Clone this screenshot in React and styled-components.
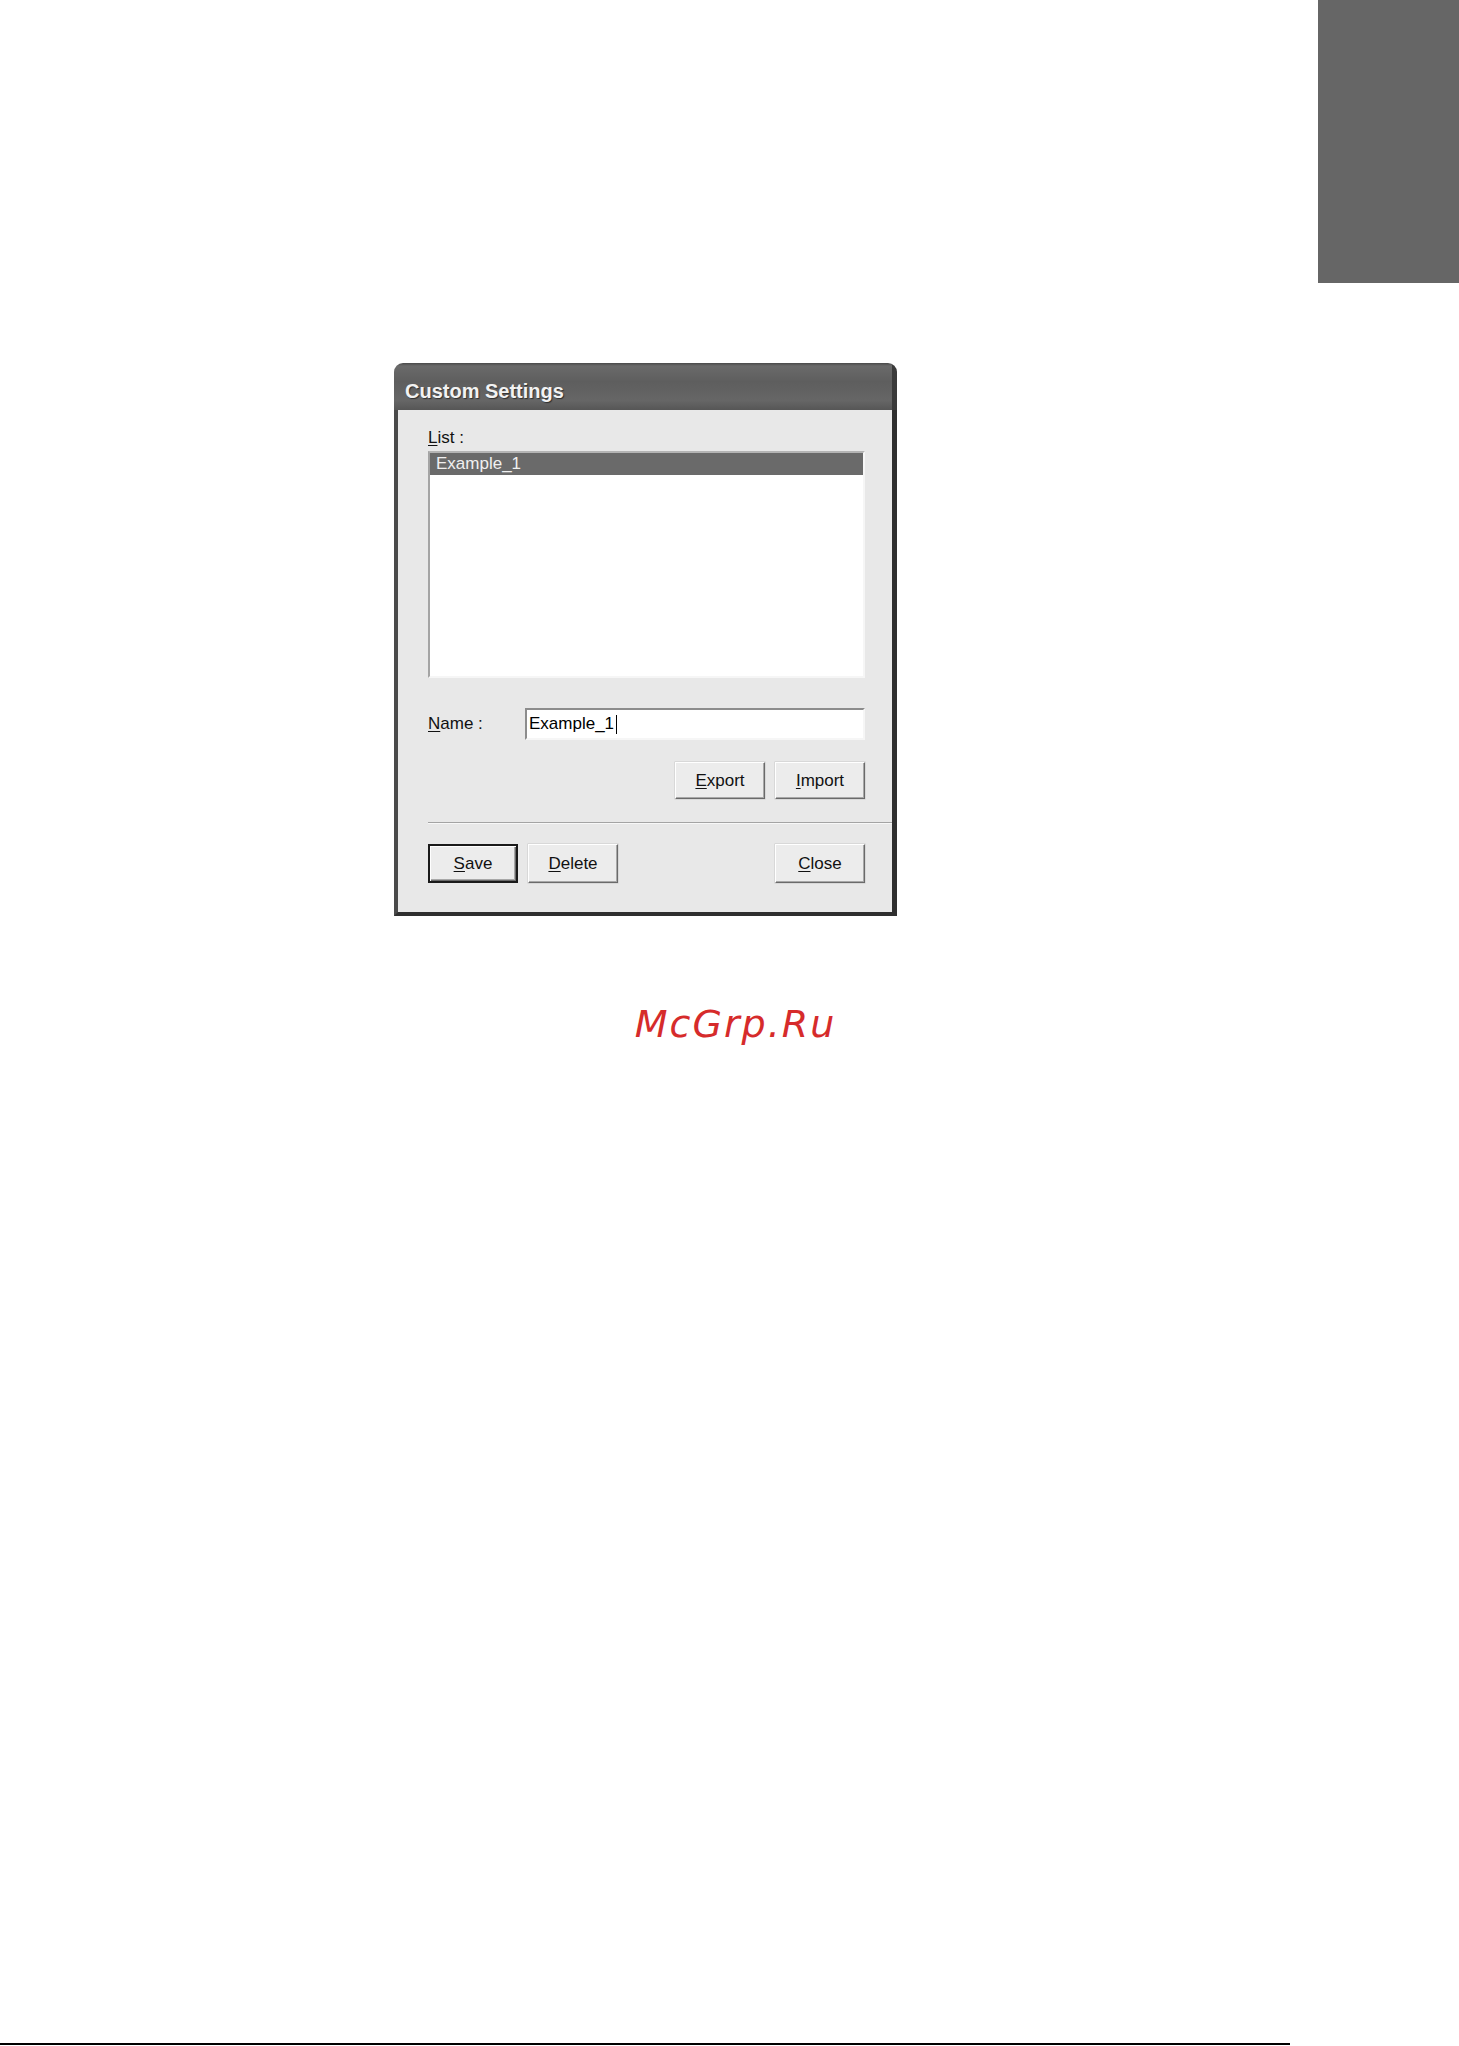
import React from 'react'
import styled, { createGlobalStyle } from 'styled-components'

const GlobalStyle = createGlobalStyle`
  html, body {
    margin: 0;
    padding: 0;
    background: #ffffff;
  }
  * {
    box-sizing: border-box;
  }
`

const Page = styled.div`
  width: 1459px;
  min-height: 2046px;
  display: flex;
  flex-direction: column;
  background: #ffffff;
  font-family: "Liberation Sans", Arial, sans-serif;
`

const TopRow = styled.div`
  display: flex;
  justify-content: flex-end;
`

const SectionTab = styled.div`
  width: 141px;
  height: 283px;
  background: #666666;
`

const Window = styled.div`
  width: 503px;
  margin: 80px 0 0 394px;
  display: flex;
  flex-direction: column;
  border-radius: 9px 9px 0 0;
  overflow: hidden;
`

const TitleBar = styled.div`
  height: 47px;
  padding: 16px 0 0 11px;
  background: linear-gradient(
    to bottom,
    #4a4a4a 0,
    #6a6a6a 3px,
    #5e5e5e 40%,
    #666666 80%,
    #565656 100%
  );
  border-right: 5px solid #3a3a3a;
  h1 {
    margin: 0;
    font-family: "Liberation Sans", Arial, sans-serif;
    font-weight: 700;
    font-size: 20px;
    line-height: 24px;
    color: #f2f2f2;
    text-shadow: 1px 1px 1px #2f2f2f;
  }
`

const Frame = styled.div`
  border-left: 4px solid #4a4a4a;
  border-right: 5px solid #2f2f2f;
  border-bottom: 4px solid #2f2f2f;
`

const Client = styled.div`
  background: #e8e8e8;
  padding: 18px 27px 29px 30px;
  display: flex;
  flex-direction: column;
  font-size: 17px;
  color: #111;
  u {
    text-decoration: underline;
    text-underline-offset: 2px;
  }
`

const Label = styled.div`
  line-height: 20px;
`

const ListBox = styled.div`
  margin-top: 3px;
  height: 227px;
  background: #ffffff;
  border: 2px solid;
  border-color: #b4b4b4 #f6f6f6 #f6f6f6 #a4a4a4;
  display: flex;
  flex-direction: column;
`

const ListItem = styled.div`
  height: 22px;
  line-height: 22px;
  padding-left: 6px;
  background: ${p => (p.$selected ? '#6a6a6a' : 'transparent')};
  color: ${p => (p.$selected ? '#f0f0f0' : '#111')};
`

const NameRow = styled.div`
  margin-top: 30px;
  display: flex;
  align-items: center;
`

const NameLabel = styled.div`
  width: 97px;
  line-height: 20px;
  flex-shrink: 0;
`

const TextField = styled.div`
  width: 340px;
  height: 32px;
  background: #ffffff;
  border: 2px solid;
  border-color: #8c8c8c #f6f6f6 #f6f6f6 #8c8c8c;
  display: flex;
  align-items: center;
  padding-left: 2px;
  color: #000;
`

const Caret = styled.span`
  display: inline-block;
  width: 1px;
  height: 19px;
  margin-left: 2px;
  background: #000;
`

const ButtonRow = styled.div`
  display: flex;
  align-items: center;
  justify-content: ${p => p.$justify || 'flex-end'};
  gap: 10px;
  margin-top: ${p => p.$top || 0}px;
`

const Group = styled.div`
  display: flex;
  gap: 10px;
`

const Button = styled.button`
  width: 90px;
  height: ${p => p.$h || 37}px;
  font-family: "Liberation Sans", Arial, sans-serif;
  font-size: 17px;
  color: #111;
  background: #ececec;
  padding: 0;
  border: ${p => (p.$default ? '2px' : '1px')} solid;
  border-color: ${p => (p.$default ? '#1a1a1a' : '#ffffff #6a6a6a #6a6a6a #ffffff')};
  box-shadow: ${p =>
    p.$default
      ? 'inset 1px 1px #ffffff, inset -1px -1px #6a6a6a, inset -2px -2px #a8a8a8'
      : 'inset -1px -1px #a8a8a8, 0 0 0 0.5px #c8c8c8'};
  cursor: default;
`

const Separator = styled.div`
  margin: 23px -27px 0 0;
  height: 2px;
  border-top: 1px solid #a4a4a4;
  border-bottom: 1px solid #f8f8f8;
`

const Watermark = styled.div`
  margin-top: 86px;
  padding-left: 12px;
  text-align: center;
  font-family: "DejaVu Sans", sans-serif;
  font-style: italic;
  font-size: 38px;
  line-height: 44px;
  letter-spacing: 2px;
  color: #d62b2b;
`

const FootRule = styled.div`
  margin-top: auto;
  margin-bottom: 1px;
  width: 1290px;
  height: 2px;
  background: #000000;
`

const App = () => {
  return (
    <Page>
      <GlobalStyle />
      <TopRow>
        <SectionTab />
      </TopRow>

      <Window>
        <TitleBar>
          <h1>Custom Settings</h1>
        </TitleBar>
        <Frame>
          <Client>
            <Label>
              <u>L</u>ist :
            </Label>
            <ListBox>
              <ListItem $selected>Example_1</ListItem>
            </ListBox>

            <NameRow>
              <NameLabel>
                <u>N</u>ame :
              </NameLabel>
              <TextField>
                Example_1
                <Caret />
              </TextField>
            </NameRow>

            <ButtonRow $top={22}>
              <Button>
                <u>E</u>xport
              </Button>
              <Button>
                <u>I</u>mport
              </Button>
            </ButtonRow>

            <Separator />

            <ButtonRow $top={20} $justify="space-between">
              <Group>
                <Button $default $h={39}>
                  <u>S</u>ave
                </Button>
                <Button $h={39}>
                  <u>D</u>elete
                </Button>
              </Group>
              <Button $h={39}>
                <u>C</u>lose
              </Button>
            </ButtonRow>
          </Client>
        </Frame>
      </Window>

      <Watermark>McGrp.Ru</Watermark>

      <FootRule />
    </Page>
  )
}

export default App
